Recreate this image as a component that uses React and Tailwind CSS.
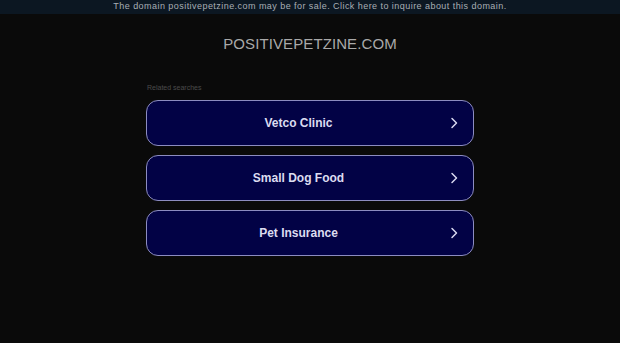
const searches = ["Vetco Clinic", "Small Dog Food", "Pet Insurance"];

function Chevron() {
  return (
    <svg className="w-[8px] h-[12px]" viewBox="0 0 8 12" fill="none" stroke="currentColor">
      <path d="M2 1.5l4.5 4.5L2 10.5" strokeWidth="1.5" strokeLinecap="round" strokeLinejoin="round" />
    </svg>
  );
}

export default function App() {
  return (
    <div className="w-[620px] h-[343px] bg-[#0a0a0a] overflow-hidden" style={{ fontFamily: '"Liberation Sans", Arial, sans-serif' }}>
      <div className="h-[14px] bg-[#0c1722] flex items-center justify-center text-[9px] text-[#a8aeb4] tracking-[0.45px]">
        The domain positivepetzine.com may be for sale. Click here to inquire about this domain.
      </div>
      <div className="pt-[21px] flex justify-center">
        <h1 className="text-[15px] leading-[17px] text-[#a9a9a9] tracking-[0.1px]">POSITIVEPETZINE.COM</h1>
      </div>
      <div className="w-[328px] mx-auto mt-[32px]">
        <div className="text-[7px] leading-[8px] text-[#4a4a4a] pl-[1px]">Related searches</div>
        <div className="mt-[8px] flex flex-col gap-[9px]">
          {searches.map((s) => (
            <div
              key={s}
              className="h-[46px] rounded-[12px] border border-[#8c8cc0] bg-[#020245] flex items-center relative pr-[23px]"
            >
              <span className="flex-1 text-center text-[12px] font-bold text-[#dcdcf0]">{s}</span>
              <span className="absolute right-[15px] top-1/2 -translate-y-1/2 text-[#d8d8f0] flex">
                <Chevron />
              </span>
            </div>
          ))}
        </div>
      </div>
    </div>
  );
}
